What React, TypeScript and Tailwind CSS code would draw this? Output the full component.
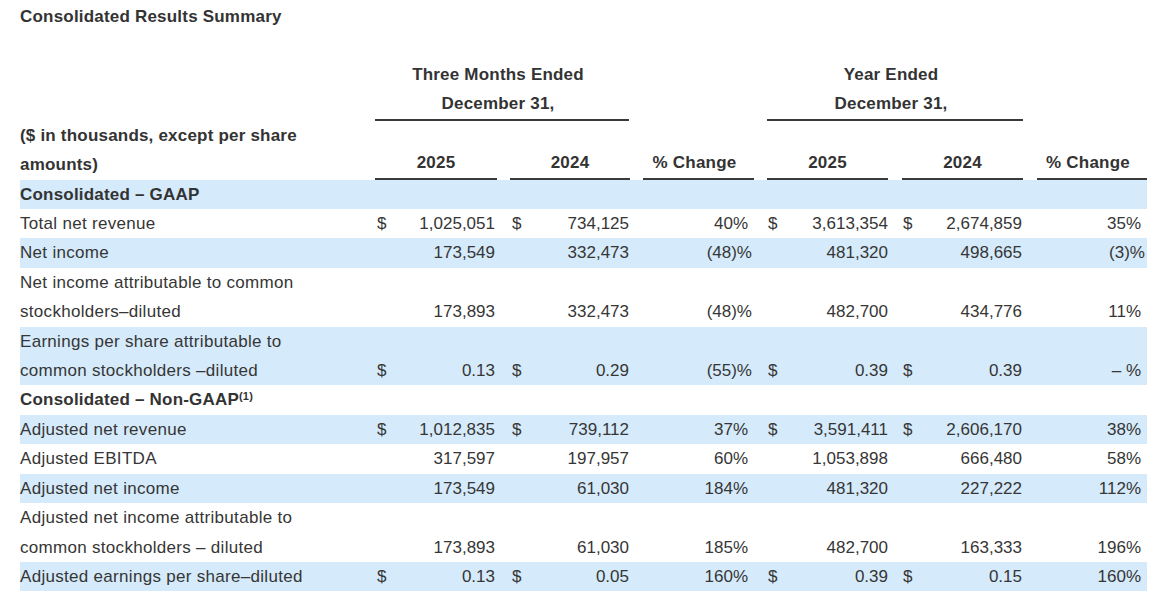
import React from 'react';

type Row = {
  label: React.ReactNode[];
  bold?: boolean;
  blue?: boolean;
  values?: string[];
  dollar?: boolean;
};

const rows: Row[] = [
  { label: ['Consolidated – GAAP'], bold: true, blue: true },
  { label: ['Total net revenue'], dollar: true, values: ['1,025,051', '734,125', '40%', '3,613,354', '2,674,859', '35%'] },
  { label: ['Net income'], blue: true, values: ['173,549', '332,473', '(48)%', '481,320', '498,665', '(3)%'] },
  {
    label: ['Net income attributable to common', 'stockholders–diluted'],
    values: ['173,893', '332,473', '(48)%', '482,700', '434,776', '11%'],
  },
  {
    label: ['Earnings per share attributable to', 'common stockholders –diluted'],
    blue: true,
    dollar: true,
    values: ['0.13', '0.29', '(55)%', '0.39', '0.39', '– %'],
  },
  {
    label: [
      <>
        Consolidated – Non-GAAP<sup className="text-[11px]">(1)</sup>
      </>,
    ],
    bold: true,
  },
  { label: ['Adjusted net revenue'], blue: true, dollar: true, values: ['1,012,835', '739,112', '37%', '3,591,411', '2,606,170', '38%'] },
  { label: ['Adjusted EBITDA'], values: ['317,597', '197,957', '60%', '1,053,898', '666,480', '58%'] },
  { label: ['Adjusted net income'], blue: true, values: ['173,549', '61,030', '184%', '481,320', '227,222', '112%'] },
  {
    label: ['Adjusted net income attributable to', 'common stockholders – diluted'],
    values: ['173,893', '61,030', '185%', '482,700', '163,333', '196%'],
  },
  { label: ['Adjusted earnings per share–diluted'], blue: true, dollar: true, values: ['0.13', '0.05', '160%', '0.39', '0.15', '160%'] },
];

const grid = 'grid grid-cols-[355px_122px_133px_124px_134px_135px_124px]';

// money cell: "$" on the left, figure on the right
const Money = ({ value, dollar, outer, inner }: { value: string; dollar?: boolean; outer: string; inner: string }) => (
  <div className={`${outer} flex items-end`}>
    <div className={`flex w-full justify-between ${inner}`}>
      <span>{dollar ? '$' : ''}</span>
      <span>{value}</span>
    </div>
  </div>
);

// percentages: the closing paren hangs past the others
const Pct = ({ value, outer }: { value: string; outer: string }) => {
  const hang = value.includes(')');
  return (
    <div className={`${outer} flex items-end justify-end`}>
      <span className={hang ? 'pr-[2px]' : 'pr-[6px]'}>{value}</span>
    </div>
  );
};

const ColHead = ({ text, outer, extra = '' }: { text: string; outer: string; extra?: string }) => (
  <div className={`${outer} flex flex-col justify-end`}>
    <div className={`border-b-2 border-[#3a3a3a] text-center font-bold tracking-[0.2px] ${extra}`}>{text}</div>
  </div>
);

export default function App() {
  return (
    <div className="min-h-screen bg-white px-[20px] pt-[2px] font-['Liberation_Sans',Arial,sans-serif] text-[17px] leading-[29.4px] text-[#363636]">
      <h1 className="font-bold tracking-[0.2px] text-[#333]">Consolidated Results Summary</h1>

      <div className="mt-[28.6px] w-[1127px]">
        {/* group headers */}
        <div className={grid}>
          <div />
          <div className="col-span-2 pr-[1px]">
            <div className="border-b-2 border-[#3a3a3a] pr-[8px] text-center font-bold tracking-[0.2px] text-[#333]">
              <div>Three Months Ended</div>
              <div>December 31,</div>
            </div>
          </div>
          <div />
          <div className="col-span-2 pl-[13px]">
            <div className="border-b-2 border-[#3a3a3a] pr-[8px] text-center font-bold tracking-[0.2px] text-[#333]">
              <div>Year Ended</div>
              <div>December 31,</div>
            </div>
          </div>
          <div />
        </div>

        {/* column headers */}
        <div className={`${grid} text-[#333]`}>
          <div className="font-bold tracking-[0.2px]">
            <div>($ in thousands, except per share</div>
            <div>amounts)</div>
          </div>
          <ColHead text="2025" outer="" />
          <ColHead text="2024" outer="pl-[13px]" />
          <ColHead text="% Change" outer="pl-[13px]" extra="pr-[8px]" />
          <ColHead text="2025" outer="pl-[13px]" />
          <ColHead text="2024" outer="pl-[14px]" />
          <ColHead text="% Change" outer="pl-[14px]" extra="pr-[8px]" />
        </div>

        {/* body */}
        {rows.map((r, i) => (
          <div key={i} className={`${grid} ${r.blue ? 'bg-[#d5eafa]' : ''}`}>
            <div className={r.bold ? 'font-bold tracking-[0.2px] text-[#333]' : 'tracking-[0.3px]'}>
              {r.label.map((l, j) => (
                <div key={j}>{l}</div>
              ))}
            </div>
            {r.values && (
              <>
                <Money value={r.values[0]} dollar={r.dollar} outer="" inner="pl-[2px] pr-[2px]" />
                <Money value={r.values[1]} dollar={r.dollar} outer="pl-[13px]" inner="pl-[2px] pr-[1px]" />
                <Pct value={r.values[2]} outer="pl-[13px]" />
                <Money value={r.values[3]} dollar={r.dollar} outer="pl-[13px]" inner="pl-[1px]" />
                <Money value={r.values[4]} dollar={r.dollar} outer="pl-[14px]" inner="pl-[1px] pr-[1px]" />
                <Pct value={r.values[5]} outer="pl-[14px]" />
              </>
            )}
          </div>
        ))}
      </div>
    </div>
  );
}
